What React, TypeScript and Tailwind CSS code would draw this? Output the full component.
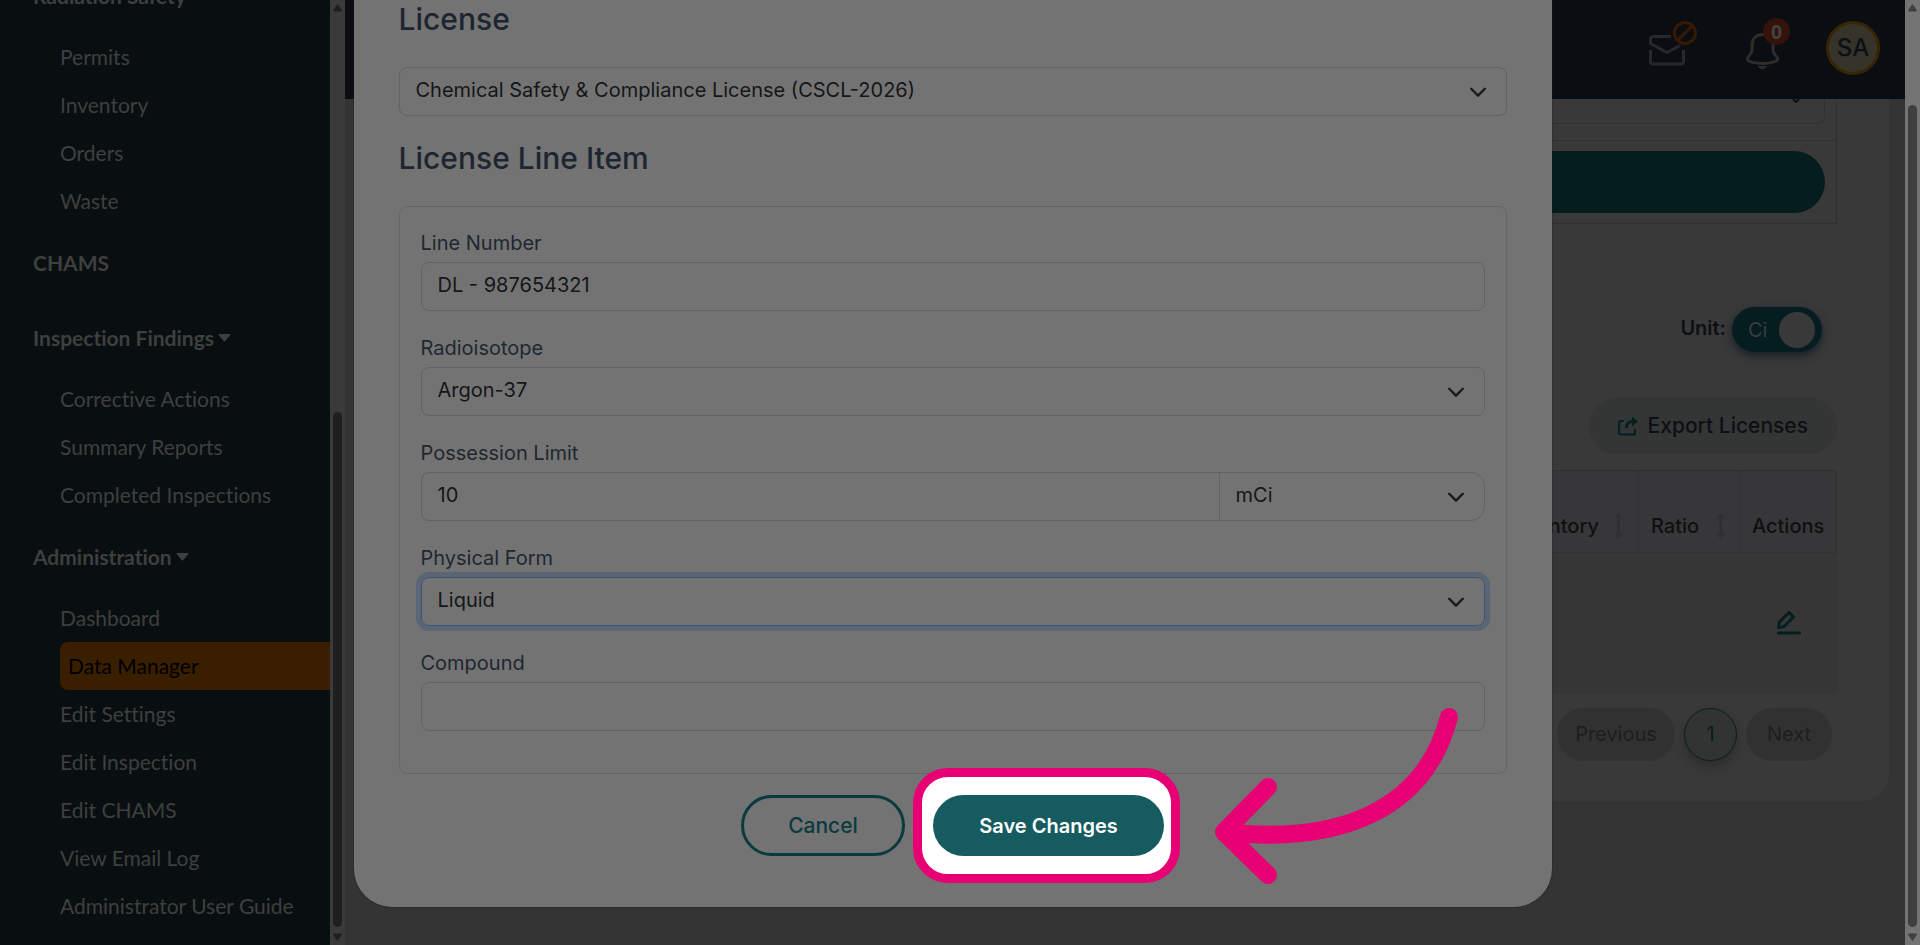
import React, { useState } from "react";

const navSections = [
  { title: "Radiation Safety", caret: true, items: ["Permits", "Inventory", "Orders", "Waste"] },
  { title: "CHAMS", caret: false, items: [] },
  {
    title: "Inspection Findings",
    caret: true,
    items: ["Corrective Actions", "Summary Reports", "Completed Inspections"],
  },
  {
    title: "Administration",
    caret: true,
    items: [
      "Dashboard",
      "Data Manager",
      "Edit Settings",
      "Edit Inspection",
      "Edit CHAMS",
      "View Email Log",
      "Administrator User Guide",
    ],
  },
];

function Sidebar() {
  return (
    <nav className="w-[330px] shrink-0 overflow-hidden bg-[#090f11] font-['Lato',sans-serif] text-[21px] text-[#3e3f3f] [font-variant-ligatures:none]">
      <div className="-mt-[42px]">
        {navSections.map((section) => (
          <section key={section.title}>
            <h2 className="flex h-[75px] items-center gap-1 pl-[33px] font-bold">
              {section.title}
              {section.caret && (
                <svg className="h-2 w-[13px]" viewBox="0 0 12 8" fill="currentColor" aria-hidden="true">
                  <path d="M.8 0h10.400c.8 0 1 .8.5 1.300L6.800 7a1 1 0 0 1-1.600 0L.3 1.300C-.2.8 0 0 .8 0Z" />
                </svg>
              )}
            </h2>
            <ul className="pl-[60px]">
              {section.items.map((item) => (
                <li key={item}>
                  <a
                    href="#"
                    className={
                      item === "Data Manager"
                        ? "flex h-12 items-center rounded-l-lg bg-[#391f00] pb-px pl-2 text-black"
                        : "flex h-12 items-center pb-px"
                    }
                  >
                    {item}
                  </a>
                </li>
              ))}
            </ul>
          </section>
        ))}
      </div>
    </nav>
  );
}

function ScrollArrow({ down = false }: { down?: boolean }) {
  return (
    <svg className={down ? "h-2 w-[9px] rotate-180" : "h-2 w-[9px]"} viewBox="0 0 9 8" fill="currentColor" aria-hidden="true">
      <path d="M4 .6.3 6C-.2 7 .2 7.5 1 7.5h7c.8 0 1.2-.5.7-1.5L5 .6a.6.6 0 0 0-1 0Z" />
    </svg>
  );
}

function SortIcon() {
  return (
    <svg className="h-[26px] w-[9px] shrink-0" viewBox="0 0 9 26" fill="#303032" aria-hidden="true">
      <path d="M4.5 0 9 5.500H6v15h3L4.500 26 0 20.500h3v-15H0Z" />
    </svg>
  );
}

function Chevron() {
  return (
    <svg
      className="pointer-events-none absolute top-1/2 right-[21px] h-4 w-4 -translate-y-1/2"
      viewBox="0 0 16 16"
      fill="none"
      stroke="#15191c"
      strokeWidth="2.3"
      strokeLinecap="round"
      strokeLinejoin="round"
      aria-hidden="true"
    >
      <path d="m1.200 4.800 6.800 6.800 6.800-6.800" />
    </svg>
  );
}

function Header() {
  return (
    <header className="flex h-[99px] shrink-0 items-center justify-end bg-[#0a0d12] pr-[25px] pb-[3px]">
      <button className="relative mr-[61px] h-[54px] w-9" aria-label="Messages">
        <svg className="absolute top-0 left-0 h-[54px] w-[50px]" viewBox="0 0 50 54" fill="none" aria-hidden="true">
          <path
            d="M22 15.500H4.500a3 3 0 0 0-3 3v4L18 31.500l13-7M1.500 29v11.500a2.500 2.500 0 0 0 2.500 2.500h28a2.500 2.500 0 0 0 2.500-2.500V29"
            stroke="#25282c"
            strokeWidth="3"
          />
          <circle cx="36" cy="12" r="10.500" stroke="#371a02" strokeWidth="3" />
          <path d="m29 19 14-14" stroke="#371a02" strokeWidth="3" />
        </svg>
      </button>
      <button className="relative mr-[47px] h-[54px] w-[33px]" aria-label="Notifications">
        <svg className="absolute top-3 left-0 h-[37px] w-[33px]" viewBox="0 0 33 37" fill="none" aria-hidden="true">
          <path
            d="M16.500 1.500C10 1.500 6 6 6 12v5c0 5-4.600 6-4.600 9 0 2.500 6.600 4.500 15.100 4.500S31.600 28.500 31.600 26c0-3-4.600-4-4.600-9v-5c0-6-4-10.500-10.500-10.500Z"
            stroke="#2e2d2c"
            strokeWidth="3"
          />
          <path d="M12 33h9c-.5 2-2.500 3-4.500 3S12.500 35 12 33Z" fill="#2e2d2c" />
        </svg>
        <span className="absolute -top-[3px] left-[17px] flex h-[27px] w-[27px] items-center justify-center rounded-full bg-[#35130a] font-['Liberation_Sans',sans-serif] text-xl font-bold text-[#434343]">
          0
        </span>
      </button>
      <button className="h-[54px] w-[54px] rounded-full border-3 border-[#392400] bg-[#36332a] text-2xl font-medium text-[#0c1116]">
        SA
      </button>
    </header>
  );
}

function Licenses() {
  return (
    <main className="mr-4 ml-9 flex h-[702px] flex-col items-end rounded-br-[26px] bg-[#393939] pr-[52px]">
      <div className="h-[125px] w-full border-r border-b border-[#303030]">
        <div className="flex h-[42px] justify-end border-b border-[#303030] pr-[11px]">
          <div className="flex h-[25px] w-full justify-end rounded-b-lg border border-t-0 border-[#313131] pr-[22px]">
            <svg className="h-1 w-3" viewBox="0 0 12 4" fill="none" stroke="#0d0f10" strokeWidth="2" aria-hidden="true">
              <path d="m3 0 3 3 3-3" />
            </svg>
          </div>
        </div>
        <div className="pt-[10px] pr-[11px]">
          <button className="block h-[62px] w-full rounded-full bg-[#051d1f]" aria-label="Apply" />
        </div>
      </div>

      <div className="mt-[83px] mr-[15px] flex items-center gap-[6px]">
        <span id="unit-label" className="pb-[3px] text-xl font-semibold text-[#0d1013]">Unit:</span>
        <button
          role="switch"
          aria-checked="true"
          aria-labelledby="unit-label"
          className="flex h-[45px] w-[90px] items-center justify-between rounded-full border border-[#081b26] bg-[#051d1f] pr-[6px] pl-[15px] text-xl text-[#393e3e] shadow-[0_4px_8px_#16202a]"
        >
          Ci
          <span className="h-9 w-9 rounded-full bg-[#393939]" />
        </button>
      </div>

      <button className="mt-[45px] flex h-[58px] items-center gap-[10px] rounded-full bg-[#343635] px-[29px] text-[21px] font-medium text-[#0c1014]">
        <svg className="h-5 w-5" viewBox="0 0 20 20" fill="none" aria-hidden="true">
          <path d="M6 5H3a2 2 0 0 0-2 2v10a1.500 1.500 0 0 0 1.500 1.500h13A1.500 1.500 0 0 0 17 17v-4" stroke="#05201f" strokeWidth="2.200" />
          <path d="M8.500 12c0-4 2-6.500 6.500-6.500" stroke="#05201f" strokeWidth="2.800" />
          <path d="M14 .5 20 5.500l-6 5Z" fill="#05201f" />
        </svg>
        Export Licenses
      </button>

      <table className="mt-[15px] w-full table-fixed border-collapse text-xl text-[#0f0f10]">
        <thead>
          <tr className="h-[82px] bg-[#373739]">
            <th className="border border-[#313133]" />
            <th className="w-[182px] border border-[#313133] px-3 pt-7 text-left font-medium">
              <span className="flex items-center justify-end gap-[15px] pr-[3px]">Inventory <SortIcon /></span>
            </th>
            <th className="w-[102px] border border-[#313133] px-3 pt-7 text-left font-medium">
              <span className="flex items-center justify-between pr-[3px]">Ratio <SortIcon /></span>
            </th>
            <th className="w-[96px] border border-[#313133] px-[11px] pt-7 text-left font-medium">Actions</th>
          </tr>
        </thead>
        <tbody>
          <tr className="h-[141px] bg-[#363636]">
            <td />
            <td />
            <td />
            <td className="pb-1 text-center">
              <button aria-label="Edit license" className="align-middle">
                <svg className="h-6 w-6" viewBox="0 0 24 24" fill="none" stroke="#051e20" strokeLinecap="round" strokeLinejoin="round" aria-hidden="true">
                  <path d="m1.500 16.500.8-5.500L12 1.500l4.500 4.500L7 15.500Z" strokeWidth="3" />
                  <path d="M1.500 22h21" strokeWidth="3" />
                </svg>
              </button>
            </td>
          </tr>
        </tbody>
      </table>

      <div className="mt-[14px] mr-[5px] flex gap-[9px] text-xl">
        <button disabled className="h-[53px] w-[118px] rounded-full bg-[#313131] text-[#1e1e1e]">Previous</button>
        <button className="h-[53px] w-[53px] rounded-full border border-[#051e20] bg-[#323433] text-[#051e20] shadow-[0_6px_10px_#2d2d2d]">1</button>
        <button disabled className="h-[53px] w-[86px] rounded-full bg-[#313131] text-[#1e1e1e]">Next</button>
      </div>
    </main>
  );
}

const control = "h-[49px] appearance-none border bg-transparent px-4 pb-[3px] text-xl text-[#151617] outline-none";

function TextField({ id, label, initial }: { id: string; label: string; initial: string }) {
  const [value, setValue] = useState(initial);
  return (
    <div>
      <label htmlFor={id} className="block h-[30px] leading-[22px] text-[#1f2731]">{label}</label>
      <input id={id} value={value} onChange={(e) => setValue(e.target.value)} className={`${control} w-full rounded-lg border-[#606264]`} />
    </div>
  );
}

function SelectField({ id, label, option, focused = false }: { id: string; label: string; option: string; focused?: boolean }) {
  return (
    <div>
      <label htmlFor={id} className="block h-[30px] leading-[22px] text-[#1f2731]">{label}</label>
      <div className="relative">
        <select
          id={id}
          className={
            focused
              ? `${control} w-full rounded-lg border-[#3d5573] ring-5 ring-[#5a6675]`
              : `${control} w-full rounded-lg border-[#606264]`
          }
        >
          <option>{option}</option>
        </select>
        <Chevron />
      </div>
    </div>
  );
}

function LicenseDialog() {
  return (
    <div
      role="dialog"
      aria-label="Edit license line item"
      className="w-full max-w-[1198px] self-start rounded-b-[38px] bg-[#737373] px-[45px] pt-px pb-[51px] text-xl shadow-[0_0_2px_#202020]"
    >
      <label htmlFor="license" className="block h-[66px] text-[30px] leading-9 font-medium text-[#1d2531]">License</label>
      <div className="relative">
        <select id="license" className={`${control} w-full rounded-lg border-[#606264]`}>
          <option>Chemical Safety &amp; Compliance License (CSCL-2026)</option>
        </select>
        <Chevron />
      </div>
      <h2 className="mt-6 mb-[30px] text-[30px] leading-9 font-medium text-[#1d2531]">License Line Item</h2>
      <div className="flex flex-col gap-[26px] rounded-lg border border-[#666666] px-[21px] pt-[25px] pb-[42px]">
        <TextField id="line-number" label="Line Number" initial="DL - 987654321" />
        <SelectField id="radioisotope" label="Radioisotope" option="Argon-37" />
        <div>
          <label htmlFor="limit" className="block h-[30px] leading-[22px] text-[#1f2731]">Possession Limit</label>
          <div className="flex">
            <input id="limit" defaultValue="10" className={`${control} w-3/4 min-w-0 rounded-l-lg border-r-0 border-[#606264]`} />
            <div className="relative w-1/4">
              <select aria-label="Possession limit unit" className={`${control} w-full rounded-r-[14px] border-[#606264]`}>
                <option>mCi</option>
              </select>
              <Chevron />
            </div>
          </div>
        </div>
        <SelectField id="physical-form" label="Physical Form" option="Liquid" focused />
        <TextField id="compound" label="Compound" initial="" />
      </div>
      <div className="mt-[21px] flex justify-center gap-7">
        <button className="h-[61px] w-[164px] rounded-full border-3 border-[#0b3a3e] text-[21px] font-medium text-[#0b3a3e]">
          Cancel
        </button>
        <div className="relative">
          <div className="absolute -inset-y-[27px] -right-4 -left-5 rounded-[35px] border-[9px] border-[#e60073] bg-white" />
          <button className="relative h-[61px] w-[231px] rounded-full bg-[#155b60] text-xl font-semibold text-white">
            Save Changes
          </button>
          <svg
            className="pointer-events-none absolute -top-[88px] left-[282px] h-[178px] w-[244px]"
            viewBox="1215 707 244 178"
            fill="none"
            stroke="#e60073"
            strokeWidth="18"
            strokeLinecap="round"
            strokeLinejoin="round"
            aria-hidden="true"
          >
            <path d="M1449 717C1425 810 1340 845 1224 832M1268 787l-44 45 44 43" />
          </svg>
        </div>
      </div>
    </div>
  );
}

export default function App() {
  return (
    <div className="flex h-screen overflow-hidden bg-[#343434] font-['Inter',sans-serif]">
      <div className="relative flex min-w-0 flex-1">
        <Sidebar />
        <div className="flex w-[15px] shrink-0 flex-col items-center bg-[#3a3a3a] py-1 text-[#1f1f1f]">
          <ScrollArrow />
          <div className="mt-auto mb-[6px] h-[515px] w-[9px] rounded-full bg-[#1f1f1f]" />
          <ScrollArrow down />
        </div>
        <div className="flex min-w-0 flex-1 flex-col">
          <Header />
          <Licenses />
        </div>
        <div className="absolute inset-0 flex justify-center">
          <LicenseDialog />
        </div>
      </div>
      <div className="flex w-[15px] shrink-0 flex-col items-center bg-[#747474] py-1 text-[#3f3f3f]">
        <ScrollArrow />
        <div className="mt-auto mb-[6px] h-[822px] w-[9px] rounded-full bg-[#3f3f3f]" />
        <ScrollArrow down />
      </div>
    </div>
  );
}
